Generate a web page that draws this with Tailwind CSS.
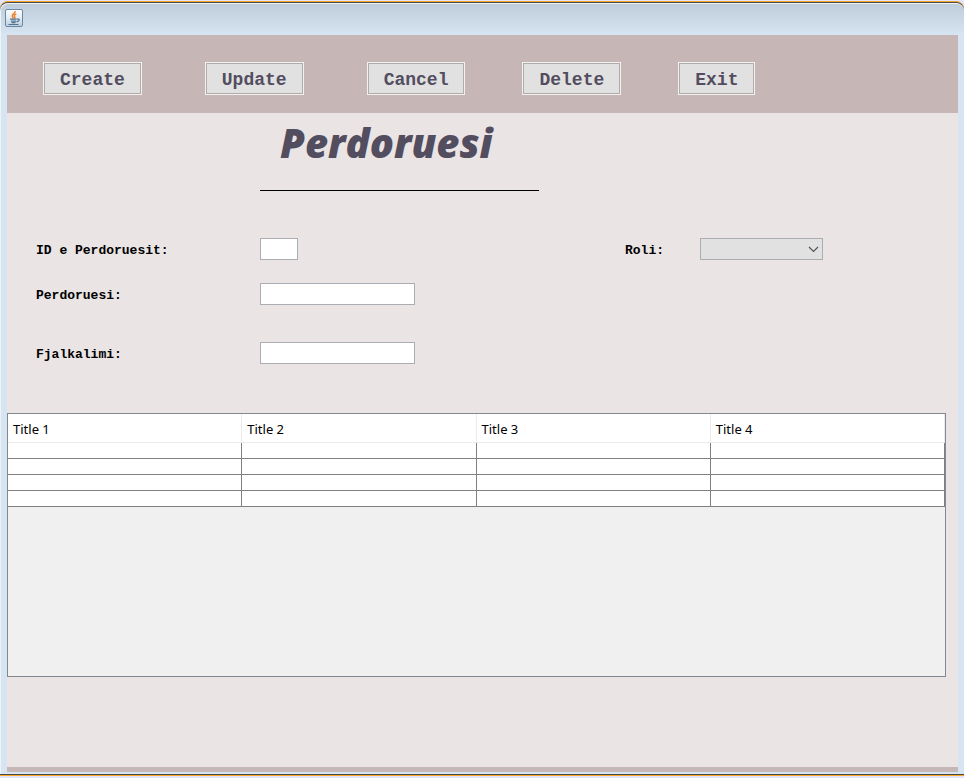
<!DOCTYPE html>
<html lang="sq">
<head>
<meta charset="utf-8">
<meta name="viewport" content="width=device-width, initial-scale=1">
<title>Perdoruesi</title>
<script src="https://cdn.jsdelivr.net/npm/@tailwindcss/browser@4"></script>
</head>
<body class="bg-[#e3e3fa]">
<div class="flex min-h-screen flex-col pb-0.5 pt-px">
  <div class="flex flex-1 flex-col rounded-t-lg border-y border-[#f5a623] bg-[#4a4a4a] py-px">
    <div class="flex flex-1 flex-col rounded-t-lg border-l border-t border-[#eef3f9] bg-[#d7e4f2]">
      <header class="flex h-[31px] items-center rounded-t-lg bg-linear-to-b from-[#bfcddb] to-[#d7e4f2] px-1 pb-1">
        <svg class="size-[18px]" viewBox="0 0 18 18" role="img" aria-label="Java">
          <defs><linearGradient id="tile" x1="0" y1="0" x2="0" y2="1"><stop offset="0" stop-color="#fff"/><stop offset=".5" stop-color="#e4ebf2"/><stop offset="1" stop-color="#bccddd"/></linearGradient></defs>
          <rect x=".5" y=".5" width="17" height="17" rx="1.5" fill="url(#tile)" stroke="#6d87a1"/>
          <path d="M10.2 2C10.8 4.2 6.6 5 7.3 7.3c.3 1 1.2 1.5 1.3 2.5M11.3 5C9 6.1 8.8 6.7 9.7 7.8c.4.6.2 1.2-.3 1.8" fill="none" stroke="#ec8428" stroke-width="1.5"/>
          <path d="M5 10.2h6.7M6 12.1h5.2M6.5 13.6h4M3.5 15.5h10M12 10.2c3.3-.9 2.8 2-.4 2.6" fill="none" stroke="#527493" stroke-width="1.2"/>
        </svg>
      </header>
      <div class="mb-0.5 ml-1.5 mr-1.5 flex flex-1 flex-col border-b-[5px] border-[#c7b6b6] bg-[#eae4e4]">
        <nav class="flex h-[78px] items-center bg-[#c7b6b6] pl-9 pt-2 font-['Liberation_Mono','Courier_New',monospace] text-lg font-bold text-[#524d5f]" aria-label="Veprimet">
          <div class="flex items-center gap-[57px]">
            <div class="flex gap-[63px]">
              <button type="button" class="h-[33px] border border-[#f4f0f0] bg-[#e1e1e1] px-4 pt-1 leading-none inset-ring inset-ring-[#adadad]">Create</button>
              <button type="button" class="h-[33px] border border-[#f4f0f0] bg-[#e1e1e1] px-4 pt-1 leading-none inset-ring inset-ring-[#adadad]">Update</button>
              <button type="button" class="h-[33px] border border-[#f4f0f0] bg-[#e1e1e1] px-4 pt-1 leading-none inset-ring inset-ring-[#adadad]">Cancel</button>
            </div>
            <button type="button" class="h-[33px] border border-[#f4f0f0] bg-[#e1e1e1] px-4 pt-1 leading-none inset-ring inset-ring-[#adadad]">Delete</button>
            <button type="button" class="h-[33px] border border-[#f4f0f0] bg-[#e1e1e1] px-4 pt-1 leading-none inset-ring inset-ring-[#adadad]">Exit</button>
          </div>
        </nav>
        <main class="flex flex-1 flex-col">
          <h1 class="ml-[253px] h-[78px] w-[279px] border-b border-black pl-5 pt-1 font-['Harlow_Solid_Italic','Open_Sans',sans-serif] text-[40px] font-extrabold italic leading-[52px] text-[#524d5f]">Perdoruesi</h1>
          <form class="flex items-start pl-[29px] pt-[47px] font-['Liberation_Mono','Courier_New',monospace] text-[13px] font-bold text-black">
            <div>
              <div class="flex h-[22px] items-center">
                <label for="uid" class="w-56 pt-1">ID e Perdoruesit:</label>
                <input id="uid" type="text" class="h-[22px] w-[38px] border border-[#abadb3] bg-white px-1">
              </div>
              <div class="mt-[23px] flex h-[22px] items-center">
                <label for="user" class="w-56 pt-1">Perdoruesi:</label>
                <input id="user" type="text" class="h-[22px] w-[155px] border border-[#abadb3] bg-white px-1">
              </div>
              <div class="mt-[37px] flex h-[22px] items-center">
                <label for="pass" class="w-56 pt-1">Fjalkalimi:</label>
                <input id="pass" type="password" class="h-[22px] w-[155px] border border-[#abadb3] bg-white px-1">
              </div>
            </div>
            <div class="ml-[210px] flex h-[22px] items-center">
              <label for="role" class="w-[75px] pt-1">Roli:</label>
              <div class="relative">
                <select id="role" class="block h-[22px] w-[123px] appearance-none border border-[#abadb3] bg-[#e1e1e1] px-1"><option></option></select>
                <svg class="pointer-events-none absolute right-1 top-2 h-[7px] w-[11px]" viewBox="0 0 11 7" fill="none" stroke="#505050" stroke-width="1.1" aria-hidden="true"><path d="M1 1l4.5 4.5L10 1"/></svg>
              </div>
            </div>
          </form>
          <div class="mb-[90px] mr-3 mt-[49px] flex-1 border border-[#828790] bg-[#f0f0f0]">
            <table class="w-full table-fixed border-separate border-spacing-0 bg-white font-['Noto_Sans',Tahoma,sans-serif] text-[13px] text-black">
              <thead>
                <tr class="h-[29px] text-left">
                  <th scope="col" class="border-b border-r border-[#ebebeb] p-0 pl-[5px] pt-0.5 font-normal leading-4">Title 1</th>
                  <th scope="col" class="border-b border-r border-[#ebebeb] p-0 pl-[5px] pt-0.5 font-normal leading-4">Title 2</th>
                  <th scope="col" class="border-b border-r border-[#ebebeb] p-0 pl-[5px] pt-0.5 font-normal leading-4">Title 3</th>
                  <th scope="col" class="border-b border-r border-[#ebebeb] p-0 pl-[5px] pt-0.5 font-normal leading-4">Title 4</th>
                </tr>
              </thead>
              <tbody class="[&_td]:border-b [&_td]:border-r [&_td]:border-[#808080] [&_td]:p-0">
                <tr class="h-4"><td></td><td></td><td></td><td></td></tr>
                <tr class="h-4"><td></td><td></td><td></td><td></td></tr>
                <tr class="h-4"><td></td><td></td><td></td><td></td></tr>
                <tr class="h-4"><td></td><td></td><td></td><td></td></tr>
              </tbody>
            </table>
          </div>
        </main>
      </div>
    </div>
  </div>
</div>
</body>
</html>
